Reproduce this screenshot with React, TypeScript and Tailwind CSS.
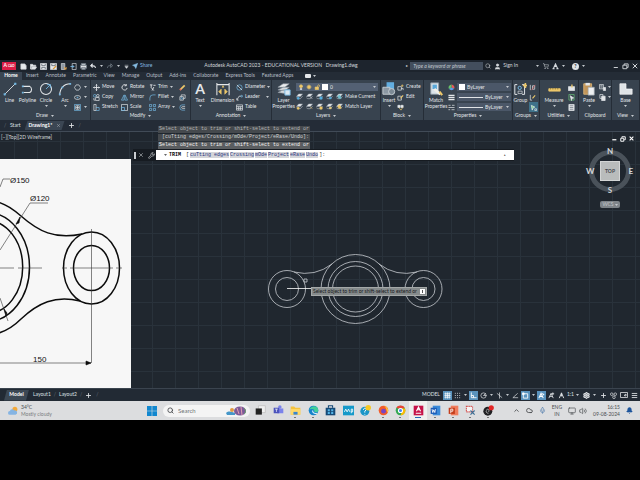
import React from 'react';
import { Search, User, ShoppingCart, ChevronUp, Mic, Cloud, Bell, Monitor, Volume2, Settings, Plus, Menu, Send, Wrench, X } from 'lucide-react';

type Kids = { children?: React.ReactNode };

const Ico: React.FC<Kids & { className?: string }> = ({ children, className = 'size-2' }) => (
  <svg className={`${className} shrink-0`} viewBox="0 0 16 16" fill="none" stroke="currentColor" strokeWidth={1.6}>
    {children}
  </svg>
);

const Caret: React.FC = () => (
  <svg className="w-[3px] h-[2px] shrink-0" viewBox="0 0 6 4" fill="#c3c8cd"><path d="M0 0h6L3 4z" /></svg>
);

/* ---------- quick access icons ---------- */
const quickIcons: React.ReactNode[] = [
  <><path d="M2 2h9l3 4v8H2z" fill="#e6e9ec" /></>,
  <><path d="M1 3h5l2 2h5v3H4l-3 6z" fill="#e6e9ec" /><path d="M5 9h10l-3 5H2z" fill="#e6e9ec" /></>,
  <><path d="M1 1h14v14H1z" fill="#e6e9ec" /><path d="M4 2v4h8V2M4 14v-4h8v4" stroke="#4a545f" /></>,
  <><path d="M1 1h14v14H1z" fill="#e6e9ec" /><path d="M4 2v4h8V2" stroke="#4a545f" /><path d="M7 14l7-7" stroke="#d99a3d" strokeWidth={3} /></>,
  <><path d="M3 1h8v14H3z" fill="#8e98a2" /><path d="M9 9l5 5M14 9v5H9" stroke="#e2a24c" strokeWidth={2} /></>,
  <><path d="M5 1h9v14H5z" /><path d="M1 8h8M6 5l3 3-3 3" stroke="#78b8e4" strokeWidth={2} /></>,
  <><path d="M3 1h10v4H3zM1 5h14v7H1zM4 10h8v5H4z" fill="#e6e9ec" stroke="#68737e" /></>,
];

const TitleBar: React.FC = () => (
  <header className="flex h-3 items-center bg-[#1d242d] text-[#d5d9dd]">
    <button className="ml-0.5 flex h-2 w-3.5 shrink-0 items-center justify-center gap-px bg-[#dc1f48] text-[5px] font-bold text-white">
      A<span className="text-[3px]">CAD</span>
    </button>
    <div className="ml-[3px] flex gap-[2px]">
      {quickIcons.map((icon, i) => (
        <button key={i} className="flex w-2 justify-center"><Ico className="size-[7px]">{icon}</Ico></button>
      ))}
    </div>
    <div className="ml-[3px] flex items-center gap-[4px]">
      <Ico className="size-[6px]"><path d="M15 13c0-5-4-6-9-6M6 2L1 7l5 5z" fill="#e6e9ec" strokeWidth={2.5} /></Ico>
      <Caret />
      <span className="text-[#7a848e]"><Ico className="size-[6px]"><path d="M1 13c0-5 4-6 9-6M10 2l5 5-5 5z" strokeWidth={2} /></Ico></span>
      <Caret />
      <Ico className="size-[5px]"><path d="M2 4h12M3 8h10l-5 6z" fill="currentColor" /></Ico>
    </div>
    <button className="ml-[3px] flex items-center gap-[2px] text-[5px] text-[#86bce3]">
      <Send className="size-[6px]" fill="#86bce3" />Share
    </button>
    <h1 className="ml-[52px] shrink-0 whitespace-pre text-[5px]">Autodesk AutoCAD 2023 - EDUCATIONAL VERSION   Drawing1.dwg</h1>
    <div className="ml-auto flex items-center">
      <span className="mr-[2px] text-[4px]">▸</span>
      <input aria-label="Search help" placeholder="Type a keyword or phrase" className="h-2 w-[73px] bg-[#434e5d] px-[3px] text-[5px] italic placeholder:text-[#c2c8cf]" />
      <Search className="ml-[2px] size-[6px]" />
      <User className="ml-[3px] size-[7px]" fill="#d5d9dd" />
      <button className="ml-[2px] mr-[18px] text-[5px]">Sign In</button>
      <Caret />
      <ShoppingCart className="ml-[4px] size-[6px]" />
      <span className="mx-[3px]"><Ico className="size-[7px]"><path d="M3 13L8 2l5 11M8 2v7M1 13h5M10 13h5" strokeWidth={2.4} /></Ico></span>
      <Caret />
      <button className="ml-[7px] mr-[3px] size-[7px] rounded-full bg-[#dfe3e6] text-center text-[5px] font-bold leading-[7px] text-[#1d242d]">?</button>
      <Caret />
      <div className="ml-[28px] mr-[2px] flex gap-[3px]">
        <button aria-label="Minimize"><Ico className="size-[6px]"><path d="M2 12h11" strokeWidth={2.5} /></Ico></button>
        <button aria-label="Restore"><Ico className="size-[7px]"><path d="M5 5V2h9v8h-3M2 5h9v8H2z" strokeWidth={2} /></Ico></button>
        <button aria-label="Close"><Ico className="size-[6px]"><path d="M2 2l12 12M14 2L2 14" strokeWidth={2.6} /></Ico></button>
      </div>
    </div>
  </header>
);

const menuTabs = ['Insert', 'Annotate', 'Parametric', 'View', 'Manage', 'Output', 'Add-ins', 'Collaborate', 'Express Tools', 'Featured Apps'];

const RibbonTabs: React.FC = () => (
  <nav className="flex h-2 items-center gap-[7px] bg-[#242c36] text-[5px] text-[#b9bfc6]">
    <button className="-mr-[3px] h-2 w-[22px] bg-[#3a4552] font-bold text-white">Home</button>
    {menuTabs.map((t) => <button key={t}>{t}</button>)}
    <span className="ml-1 flex items-center gap-[2px]"><span className="h-1 w-1.5 rounded-[1px] bg-[#e4e7ea]" /><Caret /></span>
  </nav>
);

/* ---------- ribbon ---------- */
const Panel: React.FC<Kids & { title: string; width: string; arrow?: boolean }> = ({ children, title, width, arrow = true }) => (
  <section className={`${width} flex flex-col border-r border-[#252d37]`}>
    <div className="flex h-8 pt-0.5">{children}</div>
    <h2 className="flex h-2 items-center justify-center gap-[3px] text-[5px]">{title}{arrow && <Caret />}</h2>
  </section>
);

const Big: React.FC<Kids & { label: string; width: string; caret?: boolean }> = ({ children, label, width, caret }) => (
  <button className={`${width} flex shrink-0 flex-col items-center text-[5px] leading-[6px]`}>
    <span className="flex h-[14px] items-center">{children}</span>
    <span className="mt-px">{label}</span>
    {caret && <span className="mt-[2px]"><Caret /></span>}
  </button>
);

const Small: React.FC<Kids & { label?: string; caret?: boolean }> = ({ children, label, caret }) => (
  <button className="flex h-2.5 items-center gap-[2px] text-[5px]">
    <Ico className="size-[7px]">{children}</Ico>
    {label}
    {caret && <span className="ml-auto"><Caret /></span>}
  </button>
);

const Stack: React.FC<Kids & { width: string }> = ({ children, width }) => (
  <div className={`${width} flex shrink-0 flex-col`}>{children}</div>
);

const blue = '#74b7e2';
const gold = '#ecc76a';

const Sheets: React.FC<{ tint: string; mark: string }> = ({ tint, mark }) => (
  <Ico className="size-[7px]">
    <path d="M1 8l5-6h9l-5 6z" fill="#e3e6e9" stroke="#9ba4ac" strokeWidth={1} />
    <path d="M1 11l3 2h6l5-6" stroke="#aab2b9" />
    <path d={mark} fill={tint} stroke={tint} />
  </Ico>
);

const Ribbon: React.FC = () => (
  <div className="flex h-10 bg-[#38434f] text-[#e3e6e9]">
    <Panel title="Draw" width="w-[91px]">
      <Big label="Line" width="w-[19px]">
        <Ico className="size-3.5"><path d="M2 14L14 2" strokeWidth={1} /><path d="M1 13h2v2H1zM13 1h2v2h-2z" fill={blue} stroke={blue} strokeWidth={0.5} /></Ico>
      </Big>
      <Big label="Polyline" width="w-[17px]">
        <Ico className="size-3.5"><path d="M2 5h8a4 4 0 010 7H3" strokeWidth={1.2} /><path d="M1 11h2v2H1zM1 4h2v2H1z" fill={blue} stroke="none" /></Ico>
      </Big>
      <Big label="Circle" width="w-[20px]" caret>
        <Ico className="size-3.5"><circle cx="8" cy="8" r="6.3" strokeWidth={1.2} /><path d="M8 8l5-5M9 3h4v4" stroke={blue} strokeWidth={1} /></Ico>
      </Big>
      <Big label="Arc" width="w-[18px]" caret>
        <Ico className="size-3.5"><path d="M2 15C2 7 7 2 14 2" strokeWidth={1.2} /><path d="M1 13h2v2H1zM4 5h2v2H4zM13 1h2v2h-2z" fill={blue} stroke="none" /></Ico>
      </Big>
      <Stack width="w-[13px]">
        <Small caret><path d="M5 2h6l4 6-4 6H5L1 8z" /></Small>
        <Small caret><ellipse cx="8" cy="8" rx="7" ry="4.5" /><path d="M7 7h2v2H7z" stroke={blue} /></Small>
        <Small caret><path d="M1 1h14v14H1z" stroke={blue} /><path d="M4 4h8v8H4zM8 4v8M4 8h8" /></Small>
      </Stack>
    </Panel>

    <Panel title="Modify" width="w-[100px]">
      <Stack width="ml-[2px] w-[28px]">
        <Small label="Move"><path d="M8 1v14M1 8h14M6 3l2-2 2 2M6 13l2 2 2-2M3 6L1 8l2 2M13 6l2 2-2 2" strokeWidth={2} /></Small>
        <Small label="Copy"><circle cx="4" cy="4" r="3" stroke={blue} /><circle cx="11" cy="4" r="3" /><path d="M6 8h8v7H6zM2 9v5h3" /></Small>
        <Small label="Stretch"><path d="M2 1v14h5V1z" /><path d="M7 8h7v7H7" stroke={blue} /></Small>
      </Stack>
      <Stack width="w-[28px]">
        <Small label="Rotate"><path d="M12 3a6 6 0 102 6M12 0v4H8" strokeWidth={2} /></Small>
        <Small label="Mirror"><path d="M7 2v12H1zM9 2v12h6z" stroke={blue} /></Small>
        <Small label="Scale"><path d="M1 1h14v14H1z" /><path d="M1 8h7v7H1z" stroke={blue} /></Small>
      </Stack>
      <Stack width="w-[24px]">
        <Small label="Trim" caret><path d="M2 2h6M5 2v5M4 7l7 8M11 7l-4 8M10 3h5" strokeWidth={2} /></Small>
        <Small label="Fillet" caret><path d="M2 15V9a7 7 0 017-7h6" stroke={blue} /></Small>
        <Small label="Array" caret><path d="M1 1h5v5H1zM10 1h5v5h-5zM1 10h5v5H1zM10 10h5v5h-5z" stroke={blue} /></Small>
      </Stack>
      <Stack width="ml-[6px] w-[9px]">
        <Small><path d="M3 13L13 3" stroke={gold} strokeWidth={4} /><path d="M2 14l3-3" stroke="#e0705e" strokeWidth={4} /></Small>
        <Small><path d="M2 6h8v8H2zM5 6V2h9v8h-4" /><circle cx="6" cy="10" r="2" stroke={blue} /></Small>
        <Small><path d="M14 2H7a5 6 0 000 12h7" stroke={blue} /><path d="M14 6H8a2 2 0 000 4h6" /></Small>
      </Stack>
    </Panel>

    <Panel title="Annotation" width="w-[81px]">
      <Big label="Text" width="w-[18px]" caret><span className="text-[14px] font-bold leading-[14px]">A</span></Big>
      <Big label="Dimension" width="w-[27px]">
        <Ico className="size-3.5"><path d="M1 1v14M15 1v14M1 3h14" strokeWidth={1.2} /><path d="M3 11l3-3v6zM13 11l-3-3v6zM7 6l1-2 1 2z" fill={gold} stroke={gold} strokeWidth={0.6} /></Ico>
      </Big>
      <Stack width="w-[33px]">
        <Small label="Diameter" caret><circle cx="8" cy="8" r="6" stroke={blue} /><path d="M2 2l12 12" /></Small>
        <Small label="Leader" caret><path d="M2 14L7 5h5M2 9v5h4" /><circle cx="13" cy="5" r="2" stroke={blue} /></Small>
        <Small label="Table"><path d="M1 2h14v12H1zM1 6h14M1 10h14M6 6v8M10 6v8" /></Small>
      </Stack>
    </Panel>

    <Panel title="Layers" width="w-[109px]">
      <Big label="Layer Properties" width="w-[23px]">
        <Ico className="size-[14px]">
          <path d="M1 6l6-4h7l-5 4z" fill="#eceeef" stroke="#88929c" strokeWidth={0.7} />
          <path d="M1 9l6-3h7l-5 4zM1 12l6-3h7l-5 4z" fill="#d8dcdf" stroke="#88929c" strokeWidth={0.7} />
          <path d="M9 9h6v6H9z" fill="#dce9f2" stroke={blue} strokeWidth={1} />
        </Ico>
      </Big>
      <div className="ml-px flex flex-1 flex-col">
        <div className="mt-px mr-[2px] flex h-2 items-center gap-[2px] bg-[#536073] px-[2px]">
          <Ico className="size-[6px]"><circle cx="8" cy="6" r="4" fill={gold} stroke={gold} /><path d="M6 12h4v3H6z" fill="#d9dce0" /></Ico>
          <Ico className="size-[6px]"><circle cx="8" cy="8" r="4" fill={gold} stroke={gold} /><path d="M8 0v16M0 8h16M3 3l10 10M13 3L3 13" stroke={gold} strokeWidth={1} /></Ico>
          <Ico className="size-[6px]"><path d="M3 8h9v7H3z" fill={gold} stroke={gold} /><path d="M10 8V4a3 3 0 015 0v3" stroke={gold} strokeWidth={2} /></Ico>
          <span className="size-[6px] bg-white" />
          <select aria-label="Layer" className="h-2 flex-1 appearance-none bg-transparent text-[5px] leading-[8px]"><option>0</option></select>
          <Caret />
        </div>
        {['Make Current', 'Match Layer'].map((name, r) => (
          <div key={name} className="mt-px flex h-[9px] items-center gap-[3px]">
            <Sheets tint={r ? gold : '#54aede'} mark="M3 10h4v4H3z" />
            <Sheets tint={r ? gold : '#e8eaec'} mark="M10 9l4 4" />
            <Sheets tint={r ? gold : '#54aede'} mark="M9 9h5v5H9z" />
            <Sheets tint={r ? '#e8d080' : '#54aede'} mark="M8 10h4v3H8z" />
            <button className="flex items-center gap-[2px] whitespace-nowrap text-[5px]">
              <Sheets tint={r ? gold : '#72c0cf'} mark="M4 8l4-4 4 8H6z" />{name}
            </button>
          </div>
        ))}
      </div>
    </Panel>

    <Panel title="Block" width="w-[43px]">
      <Big label="Insert" width="w-[16px]" caret>
        <Ico className="size-[14px]"><path d="M6 1h7v9H6z" fill="#63aee0" stroke="#63aee0" /><path d="M1 6h8v8H1z" fill="#8c98a3" stroke="#ccd2d7" strokeWidth={1} /><circle cx="11" cy="11" r="3.5" fill="#7c8994" stroke="#ccd2d7" strokeWidth={1} /></Ico>
      </Big>
      <Stack width="w-[24px]">
        <Small label="Create"><path d="M2 6h8v8H2zM9 10h5v4" /><path d="M12 1v6M9 4h6" stroke={gold} /></Small>
        <Small label="Edit"><path d="M2 5h8v9H2z" /><path d="M8 10l6-7" stroke={gold} strokeWidth={2.5} /></Small>
        <Small><path d="M2 3h5v5H2zM9 3h5v5H9z" fill="#e3e6e9" /><path d="M5 9l4 5 4-6" stroke={gold} /></Small>
      </Stack>
    </Panel>

    <Panel title="Properties" width="w-[89px]">
      <Big label="Match Properties" width="w-[24px]">
        <Ico className="size-[14px]"><path d="M2 1h9v13H2z" fill="#dce4ea" stroke="#8c98a3" strokeWidth={1} /><path d="M4 3h5v5H4z" fill="#5aa8da" stroke="none" /><path d="M6 8l7 6" stroke="#f0efe9" strokeWidth={3} /><path d="M12 11l3 4" stroke={gold} strokeWidth={2.5} /></Ico>
      </Big>
      <Stack width="w-[9px]">
        <Small><path d="M8 8V1a7 7 0 016 10z" fill="#e95858" stroke="none" /><path d="M8 8l6 3a7 7 0 01-12 0z" fill="#5b9be8" stroke="none" /><path d="M8 8l-6 3A7 7 0 018 1z" fill="#68c167" stroke="none" /></Small>
        <Small><path d="M1 3h14M1 8h14M1 13h14" strokeWidth={3} /></Small>
        <Small><path d="M1 3h5M9 3h6M1 8h14M1 13h4M8 13h7" /></Small>
      </Stack>
      <div className="flex flex-1 flex-col gap-[2px] pr-px pt-px">
        {['Color', 'Lineweight', 'Linetype'].map((n, i) => (
          <label key={n} className="flex h-2 items-center gap-[2px] bg-[#4b5768] px-[2px] text-[5px]">
            {i === 0 ? <span className="size-[6px] bg-white" /> : <span className="h-px w-[24px] shrink-0 bg-[#dfe3e6]" />}
            <select aria-label={n} className="h-2 min-w-0 flex-1 appearance-none bg-transparent leading-[8px]"><option>ByLayer</option></select>
            <Caret />
          </label>
        ))}
      </div>
    </Panel>

    <Panel title="Groups" width="w-[27px]">
      <Big label="Group" width="w-[15px]">
        <Ico className="size-[13px]"><path d="M4 2H1v12h3M10 2h3v12h-3" strokeWidth={1.2} /><circle cx="7" cy="6" r="2" stroke={blue} strokeWidth={1.2} /><path d="M5 10h5v3H5z" strokeWidth={0.8} /><path d="M14 0v6M11 3h5" stroke={gold} strokeWidth={2} /></Ico>
      </Big>
      <Stack width="ml-px w-[9px]">
        <Small><path d="M3 2v12M8 4h5v8H8z" /><path d="M6 14l8-12" stroke="#e16a6a" /></Small>
        <Small><path d="M3 2v12h4" /><path d="M8 10l6-7" stroke={gold} strokeWidth={2.5} /></Small>
        <span className="flex w-[9px] justify-center bg-[#3e7189]"><Small><path d="M3 3l8 4-4 2-2 5z" fill="#7ed28a" stroke="#e3e6e9" /><path d="M11 11h4v4h-4z" /></Small></span>
      </Stack>
    </Panel>

    <Panel title="Utilities" width="w-[39px]">
      <Big label="Measure" width="w-[28px]" caret>
        <Ico className="size-[13px]"><path d="M1 7h14v3H1z" fill={gold} stroke={gold} strokeWidth={1} /><path d="M3 6v2M6 6v2M9 6v2M12 6v2" stroke="#7d662a" strokeWidth={0.8} /></Ico>
      </Big>
      <Stack width="w-[8px]">
        <Small><path d="M1 6h14v9H1z" fill="#e3e6e9" /><path d="M9 1v7" stroke={gold} strokeWidth={3} /></Small>
        <Small><path d="M2 1h12v13H2z" stroke="#69c077" /><path d="M5 4l8 5-4 1-1 5z" fill="#e3e6e9" /></Small>
        <Small><path d="M2 1h12v14H2z" fill="#e3e6e9" /><path d="M4 4h8M4 8h8M4 12h8" stroke="#65707b" /></Small>
      </Stack>
    </Panel>

    <Panel title="Clipboard" width="w-[33px]" arrow={false}>
      <Big label="Paste" width="w-[20px]" caret>
        <Ico className="size-[14px]"><path d="M2 2h9v12H2z" fill="#c29558" stroke="#dab476" strokeWidth={1} /><path d="M4 1h5v3H4z" fill="#e3e6e9" stroke="none" /><path d="M7 6h7v9H7z" fill="#eef0f1" stroke="#9aa3ab" strokeWidth={0.8} /></Ico>
      </Big>
      <Stack width="w-[12px]">
        <Small caret><path d="M1 1h9v10H1zM3 4h5M3 7h5" /><path d="M10 8h5v7h-5z" fill="#e3e6e9" /></Small>
        <Small caret><path d="M2 1h7v9H2z" /><path d="M6 5h8v10H6z" fill="#e3e6e9" /></Small>
      </Stack>
    </Panel>

    <Panel title="View" width="flex-1">
      <Big label="Base" width="w-full" caret>
        <Ico className="size-[14px]"><path d="M1 2h7v6h7v6H1z" fill="#dfe3e6" stroke="#f3f4f5" strokeWidth={0.8} /></Ico>
      </Big>
    </Panel>
  </div>
);

const FileTabs: React.FC = () => (
  <div className="flex h-[11px] items-center bg-[#242c37] text-[5px] text-[#dfe2e5]">
    <span className="w-2.5 pl-1 text-[#66707b]">/</span>
    <button>Start</button>
    <div className="ml-1 flex h-[9px] w-[40px] items-center justify-between bg-[#3b4653] px-1 font-bold text-white [clip-path:polygon(3px_0,100%_0,37px_100%,0_100%)]">
      Drawing1*<X className="size-[5px] text-[#b8bec4]" />
    </div>
    <Plus className="ml-[3px] size-[7px]" strokeWidth={3} />
    <span className="ml-1 text-[#66707b]">/</span>
  </div>
);

/* ---------- scanned part drawing on the left ---------- */
const PartSheet: React.FC = () => (
  <svg className="absolute bottom-0 left-0 h-[229px] w-[131px] bg-[#f7f7f7]" viewBox="0 159 131 229" fill="none" stroke="#0c0c0c" fontFamily="Liberation Sans, sans-serif">
    <g strokeWidth="1.5">
      <ellipse cx="91.5" cy="268" rx="28" ry="36" />
      <ellipse cx="91.5" cy="268" rx="18" ry="22.5" />
      <ellipse cx="-13" cy="267" rx="42.5" ry="54.5" />
      <ellipse cx="-13" cy="267" rx="35.7" ry="46.5" />
      <path d="M-1 202.5C8 205 14 210 21 216C38 231 55 240 82 234" />
      <path d="M-1 333C8 330 15 325 21 319C38 303 55 295 80 301" />
    </g>
    <g strokeWidth="0.6" stroke="#333">
      <path d="M0 268h14M18 268h24M62 268h5M70 268h43M116 268h6" />
      <path d="M91.5 229v134M0 363h91" />
      <path d="M0 187l3-8h7M48 203H30L0 250M0 298l8 23" />
    </g>
    <path d="M16 224l4-7 -1 6zM86 361l5 2-5 2zM4 309l2 7 1-3z" fill="#0c0c0c" strokeWidth="0.6" />
    <g fill="#111" stroke="none" fontSize="8">
      <text x="10" y="183">Ø150</text>
      <text x="30" y="201">Ø120</text>
      <text x="33" y="362">150</text>
    </g>
  </svg>
);

const ModelDrawing: React.FC = () => (
  <svg className="absolute left-0 top-0 h-full w-full" fill="none" stroke="#c8ccd0" strokeWidth="0.8">
    <defs>
      <pattern id="grid" x="14" y="9" width="23" height="23" patternUnits="userSpaceOnUse">
        <path d="M.5 0v23M0 .5h23" stroke="#29323b" strokeWidth="1" />
      </pattern>
    </defs>
    <rect width="100%" height="100%" fill="url(#grid)" stroke="none" />
    <circle cx="355.5" cy="157" r="34.5" />
    <circle cx="355.5" cy="157" r="27.5" />
    <circle cx="355.5" cy="157" r="23" />
    <circle cx="287" cy="157" r="18.5" />
    <circle cx="287" cy="157" r="11.5" />
    <circle cx="423.5" cy="157" r="18.5" />
    <circle cx="423.5" cy="157" r="11.5" />
    <path d="M294 140Q315 145 332 132M379 132Q396 145 417 140" />
    <path d="M287 156.5h25" stroke="#fff" />
    <path d="M304 147h3v3h-3z" />
  </svg>
);

const options = ['cuTting edges', 'Crossing', 'mOde', 'Project', 'eRase', 'Undo'];

const CommandLine: React.FC = () => (
  <div className="absolute -top-[6px] left-[133px] w-[381px] font-['Liberation_Mono',monospace] text-[5px]">
    <div className="ml-[25px] flex w-fit flex-col gap-px whitespace-pre leading-[7px]">
      <p className="bg-[#45494d] px-px text-[#b0b3b6]">Select object to trim or shift-select to extend or</p>
      <p className="bg-[#45494d] px-px text-[#d0d2d4]"> [cuTting edges/Crossing/mOde/Project/eRase/Undo]:</p>
      <p className="bg-[#5a5d60] px-px text-[#f2f2f2]">Select object to trim or shift-select to extend or</p>
    </div>
    <div className="flex h-3 items-center bg-[#161b21] leading-[6px] text-[#dfe2e5]">
      <span className="ml-px h-[7px] w-[2px] bg-[#c9cdd1]" />
      <X className="ml-[2px] size-[6px]" />
      <Wrench className="ml-[4px] size-[7px]" />
      <div className="ml-px flex h-[10px] flex-1 items-center gap-[2px] bg-white px-[8px] text-[#2b2b2b]">
        <svg className="h-[2px] w-[3px]" viewBox="0 0 6 4" fill="#666"><path d="M0 0h6L3 4z" /></svg>
        <span className="mr-[3px] font-bold text-black">TRIM</span>
        <span>[</span>
        {options.map((o) => <button key={o} className="-ml-px bg-[#d4d5d9] text-[#2c3680]">{o}</button>)}
        <span className="-ml-px">]:</span>
        <input aria-label="Command" className="h-[6px] w-0 flex-1" />
        <span className="text-[4px]">▴</span>
      </div>
    </div>
  </div>
);

const ViewCube: React.FC = () => (
  <div className="absolute right-1.5 top-1 flex w-12 flex-col items-center text-[#d4d7da]">
    <div className="flex gap-[3px] self-end text-white">
      <Ico className="size-[5px]"><path d="M1 12h13" strokeWidth={4} /></Ico>
      <Ico className="size-[6px]"><path d="M5 5V2h9v8h-3M2 6h8v8H2z" strokeWidth={2.5} /></Ico>
      <Ico className="size-[5px]"><path d="M2 2l12 12M14 2L2 14" strokeWidth={3.5} /></Ico>
    </div>
    <div className="relative mt-[8px] flex size-[42px] items-center justify-center rounded-full border-[5px] border-[#4a525a] text-[8px] font-bold leading-[8px]">
      <span className="absolute -top-[8px]">N</span>
      <span className="absolute -bottom-[7px]">S</span>
      <span className="absolute -left-[8px]">W</span>
      <span className="absolute -right-[7px]">E</span>
      <button className="size-5 border border-[#d3d5d5] bg-[#b9bcbc] text-[5px] text-[#43484c]">TOP</button>
    </div>
    <button className="mt-[9px] flex h-[7px] w-5 items-center justify-center gap-px rounded-[2px] bg-[#7f858a] text-[5px] text-[#c4c8cb]">WCS<Caret /></button>
  </div>
);

const Canvas: React.FC = () => (
  <main className="relative min-h-0 flex-1 border-t border-[#414b57] bg-[#20272f]">
    <ModelDrawing />
    <p className="absolute left-px top-[2px] text-[5px] leading-[6px] text-[#d5d8db]">[−][Top][2D Wireframe]</p>
    <PartSheet />
    <CommandLine />
    <ViewCube />
    <div role="tooltip" className="absolute left-[311px] top-[155px] flex h-[9px] items-center gap-[3px] whitespace-nowrap border border-[#a4a8a8] bg-[#858a8b] px-px text-[5px] leading-[7px] text-[#15181b]">
      Select object to trim or shift-select to extend or
      <span className="flex size-[5px] items-center justify-center bg-white"><span className="h-[3px] w-px bg-[#555]" /></span>
    </div>
  </main>
);

const toggles: { icon: React.ReactNode; on?: boolean; caret?: boolean }[] = [
  { icon: <path d="M1 4h14M1 8h14M1 12h14M4 1v14M8 1v14M12 1v14" />, on: true },
  { icon: <path d="M2 3h2M7 3h2M12 3h2M2 8h2M7 8h2M12 8h2M2 13h2M7 13h2M12 13h2" strokeWidth={2} />, caret: true },
  { icon: <path d="M3 1v12h12M3 8h5v5" strokeWidth={2} />, on: true },
  { icon: <><circle cx="8" cy="8" r="6" /><path d="M8 8h7M8 8l5-5" /></>, caret: true },
  { icon: <path d="M2 3l12 10M8 1v14" />, caret: true },
  { icon: <path d="M14 13H2L13 3" /> },
  { icon: <><path d="M3 4h10v10H3z" strokeWidth={2} /><path d="M1 2h4v4H1z" fill="#fff" /></>, on: true, caret: true },
  { icon: <path d="M2 14L7 3l5 11M4 10h6M10 3l4 4" strokeWidth={2.4} />, on: true },
  { icon: <path d="M2 14L7 3l5 11M4 10h6M11 1v6M8 4h6" strokeWidth={2} /> },
  { icon: <path d="M3 14L8 2l5 12M8 2v8" strokeWidth={2.2} /> },
];

const StatusBar: React.FC = () => (
  <div className="flex h-[13px] items-center border-t border-[#3b444f] bg-[#222a34] text-[5px] text-[#dde0e3]">
    <button className="ml-1 h-[11px] w-[25px] bg-[#3c4854] font-bold text-white [clip-path:polygon(3px_0,100%_0,22px_100%,0_100%)]">Model</button>
    <button className="ml-1">Layout1</button>
    <span className="mx-[3px] text-[#66707b]">/</span>
    <button>Layout2</button>
    <span className="mx-[3px] text-[#66707b]">/</span>
    <Plus className="size-[7px]" strokeWidth={3} />
    <span className="ml-1 text-[#66707b]">/</span>
    <div className="ml-auto mr-[2px] flex items-center">
      <button className="mr-[3px]">MODEL</button>
      {toggles.map((t, i) => (
        <React.Fragment key={i}>
          <button className={`flex h-[9px] w-[9px] items-center justify-center ${t.on ? 'bg-[#5a93bd] text-white' : ''}`}><Ico className="size-[7px]">{t.icon}</Ico></button>
          {t.caret ? <span className="mx-[2px]"><Caret /></span> : <span className="w-px" />}
        </React.Fragment>
      ))}
      <button className="mr-[3px] flex items-center gap-[2px]">1:1<Caret /></button>
      <Settings className="mr-[3px] ml-px size-[7px]" strokeWidth={4} />
      <Caret />
      <Plus className="ml-[4px] size-[7px]" strokeWidth={3} />
      <span className="mx-[3px]"><Ico className="size-[7px]"><circle cx="4" cy="5" r="3" /><circle cx="12" cy="5" r="3" /><circle cx="9" cy="12" r="3" /></Ico></span>
      <Ico className="size-[8px]"><path d="M1 3h14v10H1zM8 9l4-3v4z" /></Ico>
      <Menu className="ml-[3px] size-[7px]" strokeWidth={3} />
    </div>
  </div>
);

/* ---------- Windows taskbar ---------- */
const apps: { name: string; icon: React.ReactNode; open?: boolean }[] = [
  { name: 'Task view', icon: <><path d="M5 1h10v10H5z" fill="#efefef" stroke="#bbb" strokeWidth={1} /><path d="M1 5h9v9H1z" fill="#222" stroke="none" /></> },
  { name: 'Teams', icon: <><path d="M6 5h9v7H6z" fill="#7b83eb" stroke="none" /><circle cx="10" cy="3" r="2.5" fill="#7b83eb" stroke="none" /><path d="M1 4h8v8H1z" fill="#4b53bc" stroke="none" /><path d="M3 6h4M5 6v4" stroke="#fff" strokeWidth={1} /></> },
  { name: 'Explorer', open: true, icon: <><path d="M1 2h5l2 2h7v10H1z" fill="#f5c33f" stroke="none" /><path d="M1 6h14v8H1z" fill="#ffda6b" stroke="none" /><path d="M5 10h6v4H5z" fill="#3986d1" stroke="none" /></> },
  { name: 'Edge', open: true, icon: <><circle cx="8" cy="8" r="7" fill="#1583cb" stroke="none" /><path d="M2 7c2-7 13-7 13 1 0 3-5 3-6 1 1-3-4-4-7-2z" fill="#43cf9b" stroke="none" /><path d="M7 8c-1 3 2 5 6 4" stroke="#e4f4fb" /></> },
  { name: 'Store', icon: <><path d="M1 4h14v11H1z" fill="#164a77" stroke="none" /><path d="M5 4V1h6v3" stroke="#164a77" /><path d="M4 6h3v3H4zM9 6h3v3H9zM4 10h3v3H4zM9 10h3v3H9z" fill="#54b5e8" stroke="none" /></> },
  { name: 'HP', icon: <><path d="M0 1h16v14H0z" fill="#1599c9" stroke="none" /><path d="M2 10l2-4 2 4 2-4 2 4M12 12V6h2v4h-2" stroke="#fff" strokeWidth={1.2} /></> },
  { name: 'Help', icon: <><circle cx="7" cy="9" r="6.5" fill="#1a96c8" stroke="none" /><path d="M5 7c0-3 5-3 4 0L7 9v2M7 13v1" stroke="#fff" strokeWidth={1.4} /><circle cx="12" cy="4" r="4" fill="#f6c823" stroke="none" /></> },
  { name: 'Firefox', open: true, icon: <><circle cx="8" cy="8" r="7" fill="#f25c2b" stroke="none" /><path d="M9 1c5 2 7 6 5 10-2-3-1-6-5-10z" fill="#fec83c" stroke="none" /><circle cx="8" cy="9" r="3.5" fill="#7645c4" stroke="none" /></> },
  { name: 'Chrome', open: true, icon: <><circle cx="8" cy="8" r="7" fill="#34a853" stroke="none" /><path d="M2 4a7 7 0 0112 0L8 6z" fill="#ea4335" stroke="none" /><path d="M14.5 5A7 7 0 018 15l3-7-2-3z" fill="#fbbc05" stroke="none" /><circle cx="8" cy="8" r="3" fill="#4285f4" stroke="#fff" /></> },
  { name: 'AutoCAD', open: true, icon: <><path d="M1 1h14v14H1z" fill="#c5124a" stroke="none" /><path d="M5 9l3-6 3 6M6 7h4M4 12h8" stroke="#fff" /></> },
  { name: 'Word', open: true, icon: <><path d="M4 1h11v14H4z" fill="#3a8ad8" stroke="none" /><path d="M1 4h9v9H1z" fill="#1b5cb8" stroke="none" /><path d="M3 6l1 5 1.5-4L7 11l1-5" stroke="#fff" strokeWidth={1.2} /></> },
  { name: 'PowerPoint', open: true, icon: <><path d="M4 1h11v14H4z" fill="#f07c5c" stroke="none" /><path d="M1 4h9v9H1z" fill="#c43e1c" stroke="none" /><path d="M4 12V6h3v3H4" stroke="#fff" strokeWidth={1.2} /></> },
  { name: 'Snip', open: true, icon: <><path d="M2 2h9v8H2z" fill="#f5f5f5" stroke="#d25353" strokeDasharray="2 1" /><path d="M8 8l6 6M14 8l-6 6" stroke="#3b6d94" /></> },
  { name: 'OBS', open: true, icon: <><circle cx="7" cy="9" r="6.5" fill="#202124" stroke="none" /><path d="M5 7c2-2 5 0 3 3M8 12c-3 0-4-2-3-4" stroke="#ddd" strokeWidth={1} /><circle cx="12" cy="4" r="3.8" fill="#e32626" stroke="none" /></> },
];

const Taskbar: React.FC = () => (
  <footer className="flex h-[19px] items-center bg-[#dcdddf] text-[5px] leading-[7px] text-[#4a4d50]">
    <button className="ml-2 flex w-[139px] items-center gap-[3px] text-left">
      <Ico className="size-[10px]"><circle cx="11" cy="5" r="4" fill="#f2a93b" stroke="none" /><path d="M3 14a3 3 0 010-6 4 4 0 017-1 3.5 3.5 0 012 7z" fill="#85b4e3" stroke="none" /></Ico>
      <span>34°C<br /><span className="text-[#797c80]">Mostly cloudy</span></span>
    </button>
    <button aria-label="Start"><Ico className="size-[10px]"><path d="M0 0h7.500v7.500H0zM8.500 0H16v7.500H8.500zM0 8.500h7.500V16H0zM8.500 8.500H16V16H8.500z" fill="#1187cf" stroke="none" /></Ico></button>
    <label className="ml-[6px] flex h-3 w-[87px] items-center gap-[4px] rounded-full bg-[#f4f4f4] px-[4px]">
      <Search className="size-[7px] shrink-0" strokeWidth={3} />
      <input aria-label="Search" placeholder="Search" className="w-0 flex-1 text-[6px] placeholder:text-[#707376]" />
      <svg className="h-[10px] w-[20px]" viewBox="0 0 20 10">
        <path d="M0 7c3-3 6-1 9 0v2H1z" fill="#4697c9" /><circle cx="6" cy="4" r="2" fill="#e29a42" />
        <ellipse cx="14" cy="5" rx="6" ry="4.5" fill="#7c5b98" /><path d="M11 2l2 6M15 1l1 8" stroke="#e39bb4" /><path d="M18 2c2 2 2 5 0 6" stroke="#65a66b" fill="none" />
      </svg>
    </label>
    <div className="ml-px flex">
      {apps.map((a) => (
        <button key={a.name} aria-label={a.name} className={`flex h-[19px] w-[18px] -mr-px flex-col items-center justify-center odd:mr-0 ${a.name === 'AutoCAD' ? 'bg-[#efefef]' : ''}`}>
          <Ico className="mt-[2px] size-[11px]">{a.icon}</Ico>
          <span className={`mt-px h-px ${a.name === 'AutoCAD' ? 'w-[6px] bg-[#2468b8]' : a.open ? 'w-[2px] bg-[#777]' : 'w-px'}`} />
        </button>
      ))}
    </div>
    <div className="ml-auto mr-[7px] flex items-center gap-[6px]">
      <ChevronUp className="size-[7px]" strokeWidth={3} />
      <Cloud className="size-[7px]" strokeWidth={3} />
      <Mic className="size-[7px] text-[#4c79ab]" />
      <span className="text-center">ENG<br />IN</span>
      <span className="flex gap-[3px]"><Monitor className="size-[8px]" /><Volume2 className="size-[8px]" /></span>
      <time className="text-right">16:15<br />09-08-2024</time>
      <Bell className="size-[7px] text-[#1d559c]" fill="#1d559c" />
    </div>
  </footer>
);

const App: React.FC = () => (
  <div className="flex h-screen flex-col overflow-hidden bg-black py-[60px] font-[Lato,sans-serif]">
    <TitleBar />
    <RibbonTabs />
    <Ribbon />
    <FileTabs />
    <Canvas />
    <StatusBar />
    <Taskbar />
  </div>
);

export default App;
